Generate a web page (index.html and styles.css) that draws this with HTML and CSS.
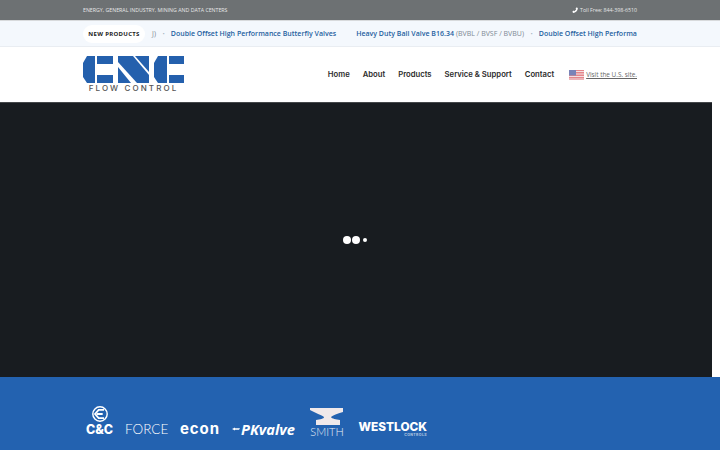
FILE: index.html
```html
<!DOCTYPE html>
<html lang="en">
<head>
    <meta charset="UTF-8">
    <meta name="viewport" content="width=device-width, initial-scale=1.0">
    <title>CNC Flow Control</title>
    <link rel="stylesheet" href="styles.css">
</head>
<body>
    <div class="top-bar">
        <div class="container top-row">
            <span>ENERGY, GENERAL INDUSTRY, MINING AND DATA CENTERS</span>
            <span class="toll">
                <svg class="phone" viewBox="0 0 10 10"><path d="M8 0.5 L9.8 2 C9.6 6 6 9.6 2 9.8 L0.5 8 L2.6 6 L3.8 6.9 C5 6.3 6.3 5 6.9 3.8 L6 2.6 Z"/></svg>
                Toll Free: 844-398-6510
            </span>
        </div>
    </div>

    <div class="ticker">
        <div class="container ticker-row">
            <span class="ticker-label">NEW PRODUCTS</span>
            <div class="ticker-track">
                <span class="muted">J)</span>
                <span class="dot">&bull;</span>
                <a href="#" class="product first">Double Offset High Performance Butterfly Valves</a>
                <a href="#" class="product">Heavy Duty Ball Valve B16.34</a>
                <span class="muted spaced">(BVBL / BVSF / BVBU)</span>
                <span class="dot">&bull;</span>
                <a href="#" class="product">Double Offset High Performa</a>
            </div>
        </div>
    </div>

    <header class="site-header">
        <div class="container header-row">
            <a href="#" class="logo">
                <svg class="logo-mark" viewBox="0 0 101 28">
                    <path d="M4 0H12V27H4L0 21V7Z"/>
                    <path d="M14 0H30V8H14ZM14 19H30V27H14Z"/>
                    <path d="M35 0H50L66 19V27H54L35 6Z"/>
                    <path d="M35 11L48 27H35ZM52 0H66V16L52 0Z"/>
                    <path d="M75 0H84V27H75L71 21V7Z"/>
                    <path d="M86 0H101V8H86ZM86 19H101V27H86Z"/>
                </svg>
                <span class="logo-text">FLOW CONTROL</span>
            </a>
            <nav class="main-nav">
                <a href="#">Home</a>
                <a href="#">About</a>
                <a href="#">Products</a>
                <a href="#">Service &amp; Support</a>
                <a href="#">Contact</a>
            </nav>
            <div class="us-site">
                <svg class="flag" viewBox="0 0 15 10">
                    <rect width="15" height="10" fill="#e5868c"/>
                    <path d="M0 1.5H15M0 4H15M0 6.5H15M0 9H15" stroke="#f3dfe1" stroke-width="1.1"/>
                    <rect width="7" height="5.5" fill="#7a83b8"/>
                </svg>
                <a href="#">Visit the U.S. site.</a>
            </div>
        </div>
    </header>

    <main class="hero">
        <div class="loader">
            <span class="ball"></span>
            <span class="ball"></span>
            <span class="ball small"></span>
        </div>
    </main>

    <footer class="brands">
        <div class="container brand-row">
            <div class="brand cc">
                <svg class="cc-mark" viewBox="0 0 20 20">
                    <circle cx="10" cy="10" r="8" fill="none" stroke="#fff" stroke-width="1.6"/>
                    <path d="M14.5 5.5H8.5L4.5 10L8.5 14.5H14.5M6.5 10H13" fill="none" stroke="#fff" stroke-width="2"/>
                </svg>
                <span>C&amp;C</span>
            </div>
            <span class="brand force">FORCE</span>
            <span class="brand econ">econ</span>
            <div class="brand pk">
                <svg class="pk-arrow" viewBox="0 0 8 6"><path d="M0 3L3 1.5V2.2H8L7 3.8H3V4.5Z" fill="#fff"/></svg>
                <span>PKvalve</span>
            </div>
            <div class="brand smith">
                <svg class="anvil" viewBox="0 0 34 19">
                    <path d="M0 1H33V5C27 7 23 8 21 10C22 12 26 12 30 13V18H6V13C10 12 14 12 14 10C12 8 5 6 0 3Z" fill="#f0e9ea"/>
                </svg>
                <span>SMITH</span>
            </div>
            <div class="brand westlock">
                <span>WESTLOCK</span>
                <small>CONTROLS</small>
            </div>
        </div>
    </footer>
</body>
</html>
```

FILE: styles.css
```css
* {
    box-sizing: border-box;
}

html,
body {
    height: 450px;
    overflow: hidden;
}

body {
    margin: 0;
    font-family: "Open Sans", Arial, sans-serif;
    background-color: #FFFFFF;
}

a {
    text-decoration: none;
}

.container {
    width: 554px;
    margin-left: 83px;
}

.top-bar {
    height: 21px;
    background-color: #6d7173;
    border-bottom: 1px solid #d8dadc;
    color: #e6e7e8;
    font-size: 5.25px;
}

.top-row {
    height: 20px;
    display: flex;
    align-items: center;
    justify-content: space-between;
}

.toll {
    display: flex;
    align-items: center;
    gap: 2px;
}

.phone {
    width: 6px;
    height: 6px;
    fill: #FFFFFF;
}

.ticker {
    height: 26px;
    background-color: #f4f8fd;
    border-bottom: 1px solid #e9edf2;
}

.ticker-row {
    height: 25px;
    display: flex;
    align-items: center;
    font-size: 7px;
    letter-spacing: 0.01px;
}

.ticker-label {
    width: 62px;
    height: 18px;
    border-radius: 9px;
    background-color: #FFFFFF;
    color: #222;
    font-size: 6px;
    font-weight: 700;
    letter-spacing: 0.3px;
    line-height: 18px;
    text-align: center;
    flex-shrink: 0;
}

.ticker-track {
    flex: 1;
    min-width: 0;
    display: flex;
    align-items: center;
    margin-left: 7px;
    white-space: nowrap;
}

.muted {
    color: #7d8894;
}

.muted.spaced {
    margin-left: 2px;
}

.dot {
    color: #a9b4c2;
    margin: 0 6px 0 6.5px;
    font-size: 6px;
}

.product {
    color: #255f9f;
    font-weight: 600;
}

.product.first {
    margin-right: 20px;
}

.site-header {
    height: 55px;
    background-color: #FFFFFF;
}

.header-row {
    height: 55px;
    display: flex;
    align-items: center;
}

.logo {
    width: 101px;
    display: flex;
    flex-direction: column;
    align-items: center;
}

.logo-mark {
    width: 101px;
    height: 28px;
    fill: #2460ad;
}

.logo-text {
    color: #555;
    font-size: 8px;
    font-family: Inter, Arial, sans-serif;
    font-weight: 500;
    letter-spacing: 2.1px;
    line-height: 9px;
    white-space: nowrap;
}

.main-nav {
    display: flex;
    gap: 13px;
    margin-left: auto;
    margin-top: -1px;
    font-family: Inter, Arial, sans-serif;
    font-size: 7.7px;
    font-weight: 600;
}

.main-nav a {
    color: #2b2b2b;
}

.us-site {
    display: flex;
    align-items: center;
    gap: 2px;
    margin-left: 15px;
    font-size: 6.4px;
}

.us-site a {
    color: #666;
    text-decoration: underline;
}

.flag {
    width: 15px;
    height: 10px;
}

.hero {
    width: 712px;
    height: 275px;
    background-color: #181c20;
    border-top: 1px solid #44474a;
    display: flex;
    align-items: center;
    justify-content: center;
}

.loader {
    display: flex;
    align-items: center;
    gap: 1px;
    margin-left: -2px;
}

.ball {
    width: 8px;
    height: 8px;
    border-radius: 50%;
    background-color: #FFFFFF;
}

.ball.small {
    width: 4px;
    height: 4px;
    margin-left: 2px;
}

.brands {
    height: 73px;
    background-color: #2362b0;
    color: #FFFFFF;
}

.brand-row {
    height: 73px;
    padding: 28px 0 0 3px;
    display: flex;
    align-items: flex-start;
}

.cc {
    width: 27px;
    display: flex;
    flex-direction: column;
    align-items: center;
    font-family: Inter, Arial, sans-serif;
    font-size: 12.5px;
    font-weight: 800;
    line-height: 13px;
}

.cc-mark {
    width: 18px;
    height: 18px;
}

.force {
    width: 43px;
    margin: 17px 0 0 12px;
    font-family: Lato, Arial, sans-serif;
    font-size: 13.5px;
    font-weight: 300;
    line-height: 14px;
}

.econ {
    width: 40px;
    margin: 15px 0 0 12px;
    font-family: Inter, Arial, sans-serif;
    font-size: 15px;
    font-weight: 700;
    letter-spacing: 0.9px;
    line-height: 18px;
}

.pk {
    width: 64px;
    margin: 16px 0 0 12px;
    display: flex;
    align-items: center;
    gap: 1px;
    font-size: 14.6px;
    font-style: italic;
    font-weight: 700;
    line-height: 16px;
}

.pk-arrow {
    width: 8px;
    height: 6px;
}

.smith {
    width: 36px;
    margin-left: 13px;
    padding-top: 2px;
    display: flex;
    flex-direction: column;
    align-items: center;
    font-family: Lato, Arial, sans-serif;
    font-size: 11px;
    font-weight: 300;
    line-height: 11px;
    color: #e8edf5;
}

.anvil {
    width: 34px;
    height: 19px;
}

.westlock {
    width: 68px;
    margin: 16px 0 0 14px;
    display: flex;
    flex-direction: column;
    align-items: flex-end;
    font-family: Inter, Arial, sans-serif;
    font-size: 11.8px;
    font-weight: 800;
    line-height: 12px;
}

.westlock small {
    color: #a9c0df;
    font-size: 3.5px;
    line-height: 4px;
    letter-spacing: 0.4px;
}
```
